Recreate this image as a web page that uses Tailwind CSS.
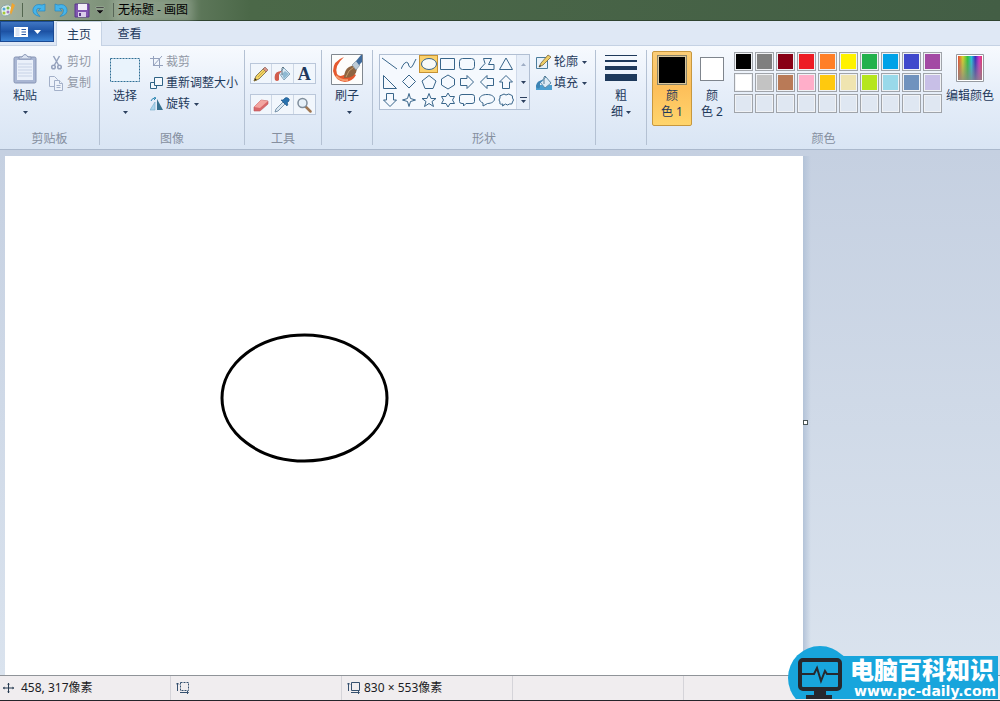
<!DOCTYPE html>
<html lang="zh-CN">
<head>
<meta charset="utf-8">
<meta name="viewport" content="width=device-width, initial-scale=1">
<title>无标题 - 画图</title>
<script src="https://cdn.jsdelivr.net/npm/@tailwindcss/browser@4"></script>
</head>
<body class="flex h-screen flex-col overflow-hidden bg-[#ccd8e8] font-['Noto_Sans','Noto_Sans_CJK_SC',sans-serif] text-xs leading-4 text-[#1e395b]">

<!-- Title bar -->
<header class="flex h-[21px] shrink-0 items-center border-b border-[#2f4430] bg-linear-to-r from-[#a5b2a0] via-[#4b6848] via-25% to-[#435e45] text-black">
  <svg class="h-4 w-4" viewBox="0 0 16 16"><path d="M1 9Q0 4 6 3q5-1 6 4-1 7-7 7-4 0-4-5z" fill="#e5eeec" stroke="#8aa6a8"/><circle cx="4" cy="7" r="1.5" fill="#50a8d8"/><circle cx="8" cy="6" r="1.5" fill="#7cbc4a"/><circle cx="4" cy="11" r="1.5" fill="#a8c838"/><circle cx="8" cy="10" r="1.5" fill="#a07ac0"/><path d="M12 1l3 2-4 10-1-3z" fill="#efa530"/></svg>
  <span class="ml-1.5 h-3.5 w-px bg-[#53664f]"></span>
  <button class="ml-2" aria-label="撤消"><svg class="h-4 w-4" viewBox="0 0 16 16"><path d="M9 14.500Q1 13 2 7q2-6 9-4l3-1v7H7l2.500-2.500Q6 5.500 5.500 8 5 11 9 14.500z" fill="#45b4ea" stroke="#2587c2" stroke-width=".7"/></svg></button>
  <button class="ml-1.5" aria-label="重做"><svg class="h-4 w-4" viewBox="0 0 16 16"><path d="M7 14.500Q15 13 14 7 12 1 5 3L2 2v7h7L6.500 6.500Q10 5.500 10.500 8 11 11 7 14.500z" fill="#45b4ea" stroke="#2587c2" stroke-width=".7"/></svg></button>
  <button class="ml-[5px]" aria-label="保存"><svg class="h-4 w-4" viewBox="0 0 16 16"><path d="M1 2h14v13H1z" fill="#8055b0" stroke="#59388a"/><path d="M4 2h9v6H4z" fill="#f2eef9"/><path d="M4 10h8v5H4z" fill="#d9ceea"/><path d="M5 11h2v3H5z" fill="#59388a"/></svg></button>
  <button class="ml-[5px]" aria-label="自定义快速访问工具栏"><svg class="h-3 w-2.5" viewBox="0 0 10 12"><path d="M1 3h8v1H1zM1 6h8L5 10z" fill="#111" stroke="#e8ede6" stroke-width=".3"/></svg></button>
  <span class="ml-2 h-3.5 w-px bg-[#405040]"></span>
  <h1 class="ml-1 bg-white/20 text-xs font-normal shadow-[0_0_8px_6px_rgba(255,255,255,0.2)]">无标题 - 画图</h1>
</header>

<!-- Tabs -->
<nav class="flex h-[25px] shrink-0 items-end border-b border-[#c5d2e4] bg-[#dfe8f5]">
  <button class="mb-[3px] flex h-[21px] w-[54px] items-center justify-center gap-1.5 border border-[#1b4a94] bg-linear-to-b from-[#3f76c3] via-[#1d52a4] to-[#3d85d6]" aria-label="画图菜单">
    <svg class="h-3 w-3.5" viewBox="0 0 14 12"><path d="M0 1h14v10H0z" fill="#fff"/><path d="M1.500 3h4M1.500 5h4M1.500 7h4M1.500 9h4" stroke="#b7cce8"/><path d="M7.500 3.500H12M7.500 6H12M7.500 8.500H12" stroke="#2b5ba4"/></svg>
    <svg class="h-1 w-[7px]" viewBox="0 0 7 4"><path d="M0 0h7L3.500 4z" fill="#fff"/></svg>
  </button>
  <button class="-mb-px ml-0.5 h-[25px] w-[46px] rounded-t-xs border border-b-0 border-[#c5d2e4] bg-[#f7fafe] pt-0.5">主页</button>
  <button class="h-[25px] w-[55px] pt-0.5">查看</button>
</nav>

<!-- Ribbon -->
<main class="flex h-[104px] shrink-0 border-b border-[#aab8cc] bg-linear-to-b from-[#f7fafe] via-[#e6eef9] via-45% to-[#d9e5f4]">
  <section class="my-1 flex w-[100px] flex-col border-r border-[#b4c1d3]" aria-label="剪贴板">
    <div class="flex flex-1">
      <button class="flex w-[50px] flex-col items-center pt-1">
        <svg class="h-[30px] w-6" viewBox="0 0 24 30"><rect x="1" y="3" width="22" height="26" rx="1.500" fill="#a9b6d3" stroke="#8795b5"/><path d="M4 6h16v20H4z" fill="#eaf0fa"/><path d="M5 10h14M5 13h14M5 16h14M5 19h14M5 22h14" stroke="#c7d2e6"/><path d="M6 5V3h3q3-5 6 0h3v2z" fill="#dbe3f1" stroke="#8795b5"/></svg>
        <span class="mt-1">粘贴</span>
        <svg class="mt-[7px] h-[3px] w-[5px]" viewBox="0 0 5 3"><path d="M0 0h5L2.500 3z" fill="#2c405f"/></svg>
      </button>
      <div class="flex flex-col gap-[3px] pt-[3px] text-[#9299a6]">
        <button class="flex h-[18px] items-center gap-1"><svg class="h-[15px] w-[13px]" viewBox="0 0 13 15" fill="none" stroke="#95a2bd" stroke-width="1.500"><path d="M3.500 1l5 9M9.500 1l-5 9"/><circle cx="3.500" cy="12" r="1.800"/><circle cx="9.500" cy="12" r="1.800"/></svg>剪切</button>
        <button class="flex h-[18px] items-center gap-1"><svg class="h-[15px] w-[13px] overflow-visible" viewBox="0 0 13 15" fill="#edf2fa" stroke="#a3b0c9"><path d="M-.500.500h5l3 3v7h-8z"/><path d="M4.500 4.500h5l3 3v7h-8z"/><path d="M9.500 4.500v3h3M6.500 9.500h4M6.500 11.500h4"/></svg>复制</button>
      </div>
    </div>
    <h2 class="text-center leading-3 font-normal text-[#858f9f]">剪贴板</h2>
  </section>

  <section class="my-1 flex w-[145px] flex-col border-r border-[#b4c1d3]" aria-label="图像">
    <div class="flex flex-1">
      <button class="flex w-[50px] flex-col items-center pt-1">
        <svg class="h-[30px] w-[30px]" viewBox="0 0 30 30"><rect x=".500" y="4.500" width="29" height="23" fill="#e9f3fc" stroke="#2f6e95" stroke-dasharray="2 1"/></svg>
        <span class="mt-1">选择</span>
        <svg class="mt-[7px] h-[3px] w-[5px]" viewBox="0 0 5 3"><path d="M0 0h5L2.500 3z" fill="#2c405f"/></svg>
      </button>
      <div class="flex flex-col items-start gap-[3px] pt-[3px] whitespace-nowrap">
        <button class="flex h-[18px] items-center gap-[3px] text-[#9299a6]"><svg class="h-3.5 w-[13px]" viewBox="0 0 13 14" fill="none" stroke="#95a2bd"><path d="M3.500 1v9.500H13M0 3.500h9.500V13M3 11l9-10"/></svg>裁剪</button>
        <button class="flex h-[18px] items-center gap-[3px]"><svg class="h-3.5 w-[13px]" viewBox="0 0 13 14" fill="#f3f8fd" stroke="#2f6285"><path d="M.500 6.500h6v6h-6z"/><path d="M4.500 1.500h8v8h-8z"/></svg>重新调整大小</button>
        <button class="flex h-[18px] items-center gap-[3px]"><svg class="h-3.5 w-[13px]" viewBox="0 0 13 14"><path d="M5 5v8H0z" fill="#aad5ec" stroke="#75abc9" stroke-width=".600"/><path d="M7 2v11h6z" fill="#37718f"/><path d="M1 4q1-3 4-3M4 0l2 1-2 2" fill="none" stroke="#2b86b2"/></svg>旋转<svg class="ml-px h-[3px] w-[5px]" viewBox="0 0 5 3"><path d="M0 0h5L2.500 3z" fill="#2c405f"/></svg></button>
      </div>
    </div>
    <h2 class="text-center leading-3 font-normal text-[#858f9f]">图像</h2>
  </section>

  <section class="my-1 flex w-[77px] flex-col border-r border-[#b4c1d3]" aria-label="工具">
    <div class="flex flex-1 flex-col items-center gap-2.5 pt-[13px]">
      <div class="grid w-[66px] grid-cols-3 divide-x divide-[#cdd7e5] border border-[#bac7da] bg-[#f1f6fc]">
        <button class="flex h-[19px] items-center justify-center" aria-label="铅笔"><svg class="h-4 w-4" viewBox="0 0 16 16"><path d="M1 15l2-5 8-8 3 3-8 8z" fill="#f3d463" stroke="#6f6544" stroke-width=".800"/><path d="M10 3l2-2 3 3-2 2z" fill="#d99487" stroke="#805b52" stroke-width=".600"/><path d="M1 15l1-3 2 2zM5 11l7-7" fill="#222" stroke="#a98832" stroke-width=".500"/></svg></button>
        <button class="flex h-[19px] items-center justify-center" aria-label="用颜色填充"><svg class="h-4 w-4" viewBox="0 0 16 16"><path d="M5 7l5-5 6 6-6 6z" fill="#d9e8f3" stroke="#6f94ac" stroke-width=".800"/><path d="M8 8l3-3 4 3-5 5z" fill="#8fb9d2"/><path d="M1 14Q-1 5 8 5L5 8v6q-2 2-4 0z" fill="#d15d4d"/><path d="M8 9V2q1-2 2 0" fill="none" stroke="#5f7786"/></svg></button>
        <button class="flex h-[19px] items-center justify-center font-['Liberation_Serif',serif] text-lg leading-4 font-bold text-[#20385b]" aria-label="文本">A</button>
      </div>
      <div class="grid w-[66px] grid-cols-3 divide-x divide-[#cdd7e5] border border-[#bac7da] bg-[#f1f6fc]">
        <button class="flex h-[19px] items-center justify-center" aria-label="橡皮擦"><svg class="h-4 w-4" viewBox="0 0 16 16"><path d="M1 10l7-7 7 1v3l-8 7H1z" fill="#d9686a" stroke="#b8565b" stroke-width=".600"/><path d="M1 10l7-7 7 1-8 7z" fill="#f2a5a0"/></svg></button>
        <button class="flex h-[19px] items-center justify-center" aria-label="颜色选取器"><svg class="h-4 w-4" viewBox="0 0 16 16"><path d="M1 15l1-3 7-7 2 2-7 7z" fill="#d9e7f2" stroke="#64839c" stroke-width=".800"/><path d="M7 3l6 6 1-2-1-1 2-2q1-2-1-3t-3 0L9 3z" fill="#2871ad" stroke="#174f83" stroke-width=".600"/></svg></button>
        <button class="flex h-[19px] items-center justify-center" aria-label="放大镜"><svg class="h-4 w-4" viewBox="0 0 16 16"><path d="M9 9l5.500 5.500" stroke="#a17853" stroke-width="2.500" stroke-linecap="round"/><circle cx="6.500" cy="6" r="4.500" fill="#e6f0f8" stroke="#7f8d9b" stroke-width="1.500"/></svg></button>
      </div>
    </div>
    <h2 class="text-center leading-3 font-normal text-[#858f9f]">工具</h2>
  </section>

  <section class="my-1 flex w-[51px] flex-col items-center border-r border-[#b4c1d3]" aria-label="刷子">
    <button class="flex flex-col items-center pt-1">
      <svg class="h-[31px] w-8" viewBox="0 0 32 31"><path d="M.500.500h31v30H.500z" fill="#fdfdfc" stroke="#818890"/><path d="M13 3Q2 7 2 17q2 10 12 11 8-1 11-7l-7-4q-8 8-12 3Q3 12 13 3z" fill="#e5592f"/><path d="M5 22q5 5 12 4" fill="none" stroke="#f49a6c" stroke-width="2"/><path d="M13 24q0-8 5-11l5-2 3 4q-1 9-13 9z" fill="#8d6441"/><path d="M15 23q2-7 8-10" stroke="#c59a68" fill="none"/><path d="M21 11l4-4 4 4-4 5z" fill="#bccad6" stroke="#71879a" stroke-width=".600"/><path d="M25 7l5-6h1v7l-3 3z" fill="#3f6b9c"/></svg>
      <span class="mt-[3px]">刷子</span>
      <svg class="mt-[7px] ml-1 h-[3px] w-[5px]" viewBox="0 0 5 3"><path d="M0 0h5L2.500 3z" fill="#2c405f"/></svg>
    </button>
  </section>

  <section class="my-1 flex w-[223px] flex-col border-r border-[#b4c1d3]" aria-label="形状">
    <div class="flex flex-1 items-start gap-1.5 pt-1 pl-1.5">
      <div class="flex w-[151px] border border-[#b1bfd3] bg-[#f5f9fe]">
        <div class="grid flex-1 grid-cols-7">
          <button class="flex h-[18px] items-center justify-center" aria-label="直线"><svg class="h-4 w-4" viewBox="0 0 16 16" fill="none" stroke="#38658a"><path d="M0 2l15 11"/></svg></button>
          <button class="flex h-[18px] items-center justify-center" aria-label="曲线"><svg class="h-4 w-4" viewBox="0 0 16 16" fill="none" stroke="#38658a"><path d="M0 13Q4 4 7 7q2 8 5 2l3-6"/></svg></button>
          <button class="flex h-[18px] items-center justify-center border border-[#c59234] bg-[#fbd16b]" aria-label="椭圆形"><svg class="h-4 w-4" viewBox="0 0 16 16" fill="#f7faf9" stroke="#38658a"><ellipse cx="8" cy="8" rx="7.500" ry="5.500"/></svg></button>
          <button class="flex h-[18px] items-center justify-center" aria-label="矩形"><svg class="h-4 w-4" viewBox="0 0 16 16" fill="none" stroke="#38658a"><path d="M.500 2.500h14v11H.500z"/></svg></button>
          <button class="flex h-[18px] items-center justify-center" aria-label="圆角矩形"><svg class="h-4 w-4" viewBox="0 0 16 16" fill="none" stroke="#38658a"><rect x=".500" y="2.500" width="15" height="11" rx="3"/></svg></button>
          <button class="flex h-[18px] items-center justify-center" aria-label="多边形"><svg class="h-4 w-4" viewBox="0 0 16 16" fill="none" stroke="#38658a"><path d="M4.500 2.500h8L9.500 8.500H15v5H.500L6 7.500z"/></svg></button>
          <button class="flex h-[18px] items-center justify-center" aria-label="三角形"><svg class="h-4 w-4" viewBox="0 0 16 16" fill="none" stroke="#38658a"><path d="M8 2l6.500 11.500h-13z"/></svg></button>
          <button class="flex h-[18px] items-center justify-center" aria-label="直角三角形"><svg class="h-4 w-4" viewBox="0 0 16 16" fill="none" stroke="#38658a"><path d="M1.500 1.500v13h13z"/></svg></button>
          <button class="flex h-[18px] items-center justify-center" aria-label="菱形"><svg class="h-4 w-4" viewBox="0 0 16 16" fill="none" stroke="#38658a"><path d="M8 1l6.500 6.500L8 14 1.500 7.500z"/></svg></button>
          <button class="flex h-[18px] items-center justify-center" aria-label="五边形"><svg class="h-4 w-4" viewBox="0 0 16 16" fill="none" stroke="#38658a"><path d="M8 1.500l7 5.500-3 7.500H4L1 7z"/></svg></button>
          <button class="flex h-[18px] items-center justify-center" aria-label="六边形"><svg class="h-4 w-4" viewBox="0 0 16 16" fill="none" stroke="#38658a"><path d="M8 1l6.500 4v6L8 15l-6.500-4V5z"/></svg></button>
          <button class="flex h-[18px] items-center justify-center" aria-label="右箭头"><svg class="h-4 w-4" viewBox="0 0 16 16" fill="none" stroke="#38658a"><path d="M1.500 4.500H8V1.500L14.500 8 8 14.500v-3H1.500z"/></svg></button>
          <button class="flex h-[18px] items-center justify-center" aria-label="左箭头"><svg class="h-4 w-4" viewBox="0 0 16 16" fill="none" stroke="#38658a"><path d="M14.500 4.500H8V1.500L1.500 8 8 14.500v-3h6.500z"/></svg></button>
          <button class="flex h-[18px] items-center justify-center" aria-label="上箭头"><svg class="h-4 w-4" viewBox="0 0 16 16" fill="none" stroke="#38658a"><path d="M8 1.500L14.500 8h-3v6.500h-7V8h-3z"/></svg></button>
          <button class="flex h-[18px] items-center justify-center" aria-label="下箭头"><svg class="h-4 w-4" viewBox="0 0 16 16" fill="none" stroke="#38658a"><path d="M8 14.500L14.500 8h-3V1.500h-7V8h-3z"/></svg></button>
          <button class="flex h-[18px] items-center justify-center" aria-label="四角星"><svg class="h-4 w-4" viewBox="0 0 16 16" fill="none" stroke="#38658a"><path d="M8 1.500l1.500 5 5 1.500-5 1.500-1.500 5-1.500-5-5-1.500 5-1.500z"/></svg></button>
          <button class="flex h-[18px] items-center justify-center" aria-label="五角星"><svg class="h-4 w-4" viewBox="0 0 16 16" fill="none" stroke="#38658a"><path d="M8 1.500l2 5h5l-4 3 1.500 5L8 11.500l-4.500 3 1.500-5-4-3h5z"/></svg></button>
          <button class="flex h-[18px] items-center justify-center" aria-label="六角星"><svg class="h-4 w-4" viewBox="0 0 16 16" fill="none" stroke="#38658a"><path d="M8 1l2 3.500h4.500L12.500 8l2 3.500H10L8 15l-2-3.500H1.500l2-3.500-2-3.500H6z"/></svg></button>
          <button class="flex h-[18px] items-center justify-center" aria-label="圆角矩形标注"><svg class="h-4 w-4" viewBox="0 0 16 16" fill="none" stroke="#38658a"><path d="M3 2.500h10q2.500 0 2.500 2v5q0 2-2.500 2H7L4.500 14v-2.500H3q-2.500 0-2.500-2v-5q0-2 2.500-2z"/></svg></button>
          <button class="flex h-[18px] items-center justify-center" aria-label="椭圆形标注"><svg class="h-4 w-4" viewBox="0 0 16 16" fill="none" stroke="#38658a"><path d="M8 2.500c4.500 0 7.500 2 7.500 4.500s-3 4.500-7 4.500L4 14v-3C1.500 10 .500 8.500.500 7c0-2.500 3-4.500 7.500-4.500z"/></svg></button>
          <button class="flex h-[18px] items-center justify-center" aria-label="云形标注"><svg class="h-4 w-4" viewBox="0 0 16 16" fill="none" stroke="#38658a"><path d="M4 3q2-2 4 0 3-2 5 0 2 0 1.500 3 2 2 0 4 0 3-3 2-2 2-4 0l-3 2 .500-2Q1 13 2 10q-2-2 0-4-1-3 2-3z"/></svg></button>
        </div>
        <div class="grid w-[13px] grid-rows-3 border-l border-[#d0daea] bg-[#e6eef9]">
          <button class="flex items-center justify-center" aria-label="向上滚动"><svg class="h-[3px] w-[5px]" viewBox="0 0 5 3"><path d="M0 3h5L2.500 0z" fill="#9faec5"/></svg></button>
          <button class="flex items-center justify-center" aria-label="向下滚动"><svg class="h-[3px] w-[5px]" viewBox="0 0 5 3"><path d="M0 0h5L2.500 3z" fill="#2c405f"/></svg></button>
          <button class="flex items-center justify-center" aria-label="更多形状"><svg class="h-1.5 w-[7px]" viewBox="0 0 7 6"><path d="M0 0h7v1H0zM1 3h5L3.500 6z" fill="#2c405f"/></svg></button>
        </div>
      </div>
      <div class="-mt-px flex flex-col gap-[3px] whitespace-nowrap">
        <button class="flex h-[18px] items-center gap-0.5"><svg class="h-4 w-4" viewBox="0 0 16 16"><path d="M.500 3.500h11v11H.500z" fill="#e9f2fa" stroke="#4b7c9c"/><path d="M3 13l2-4 7-8 3 2-8 8z" fill="#efce67" stroke="#77663c" stroke-width=".800"/><path d="M3 13l1-2 1 1z" fill="#222"/></svg>轮廓<svg class="ml-0.5 h-[3px] w-[5px]" viewBox="0 0 5 3"><path d="M0 0h5L2.500 3z" fill="#2c405f"/></svg></button>
        <button class="flex h-[18px] items-center gap-0.5"><svg class="h-4 w-4" viewBox="0 0 16 16"><path d="M0 10h16v5H0z" fill="#4c9fd0"/><path d="M4 7l6-5 5 6-6 5z" fill="#deebf5" stroke="#5e8ba8"/><path d="M0 12q0-7 8-7L4 8v4q-1 3-4 0z" fill="#3c83b4"/><path d="M8 9V2q1-2 2 0" fill="none" stroke="#587e98"/></svg>填充<svg class="ml-0.5 h-[3px] w-[5px]" viewBox="0 0 5 3"><path d="M0 0h5L2.500 3z" fill="#2c405f"/></svg></button>
      </div>
    </div>
    <h2 class="text-center leading-3 font-normal text-[#858f9f]">形状</h2>
  </section>

  <section class="my-1 flex w-[51px] flex-col items-center border-r border-[#b4c1d3]" aria-label="粗细">
    <button class="flex flex-col items-center pt-[5px]">
      <svg class="h-[26px] w-8" viewBox="0 0 32 26"><path d="M0 0h32v1H0zM0 5h32v2H0zM0 11h32v4H0zM0 19h32v7H0z" fill="#1e395b"/></svg>
      <span class="mt-[7px]">粗</span>
      <span class="flex items-center gap-[3px]">细<svg class="h-[3px] w-[5px]" viewBox="0 0 5 3"><path d="M0 0h5L2.500 3z" fill="#2c405f"/></svg></span>
    </button>
  </section>

  <section class="my-1 flex min-w-0 flex-1 flex-col" aria-label="颜色">
    <div class="flex flex-1 items-start pt-px pl-[5px]">
      <button class="flex h-[75px] w-10 flex-col items-center rounded-xs border border-[#c7983f] bg-linear-to-b from-[#fbcd77] via-[#fdbf5a] to-[#ffd56d] pt-[3px]">
        <span class="h-[30px] w-[30px] border border-[#8b8468] bg-black outline-1 -outline-offset-2 outline-[#d8c69d]"></span>
        <span class="mt-[3px]">颜</span>
        <span>色 1</span>
      </button>
      <button class="flex h-[75px] w-10 flex-col items-center pt-1.5">
        <span class="h-6 w-6 border border-[#7f858d] bg-white"></span>
        <span class="mt-[7px]">颜</span>
        <span>色 2</span>
      </button>
      <div class="mt-px ml-0.5 grid shrink-0 grid-cols-10 gap-0.5 *:h-[19px] *:w-[19px] *:border *:border-[#a0a4aa] *:shadow-[inset_0_0_0_1px_#f0f2f5]">
        <button class="bg-black" aria-label="黑色"></button><button class="bg-[#7f7f7f]" aria-label="灰色-50%"></button><button class="bg-[#880015]" aria-label="深红色"></button><button class="bg-[#ed1c24]" aria-label="红色"></button><button class="bg-[#ff7f27]" aria-label="橙色"></button><button class="bg-[#fff200]" aria-label="黄色"></button><button class="bg-[#22b14c]" aria-label="绿色"></button><button class="bg-[#00a2e8]" aria-label="青绿"></button><button class="bg-[#3f48cc]" aria-label="靛青"></button><button class="bg-[#a349a4]" aria-label="紫色"></button>
        <button class="bg-white" aria-label="白色"></button><button class="bg-[#c3c3c3]" aria-label="灰色-25%"></button><button class="bg-[#b97a57]" aria-label="褐色"></button><button class="bg-[#ffaec9]" aria-label="玫瑰色"></button><button class="bg-[#ffc90e]" aria-label="金色"></button><button class="bg-[#efe4b0]" aria-label="浅黄色"></button><button class="bg-[#b5e61d]" aria-label="酸橙色"></button><button class="bg-[#99d9ea]" aria-label="淡青绿色"></button><button class="bg-[#7092be]" aria-label="蓝灰色"></button><button class="bg-[#c8bfe7]" aria-label="淡紫色"></button>
        <button class="bg-[#dfe7f2]" aria-label="自定义 1"></button><button class="bg-[#dfe7f2]" aria-label="自定义 2"></button><button class="bg-[#dfe7f2]" aria-label="自定义 3"></button><button class="bg-[#dfe7f2]" aria-label="自定义 4"></button><button class="bg-[#dfe7f2]" aria-label="自定义 5"></button><button class="bg-[#dfe7f2]" aria-label="自定义 6"></button><button class="bg-[#dfe7f2]" aria-label="自定义 7"></button><button class="bg-[#dfe7f2]" aria-label="自定义 8"></button><button class="bg-[#dfe7f2]" aria-label="自定义 9"></button><button class="bg-[#dfe7f2]" aria-label="自定义 10"></button>
      </div>
      <button class="ml-1 flex shrink-0 flex-col items-center pt-[3px] whitespace-nowrap">
        <svg class="h-7 w-7" viewBox="0 0 28 28"><defs><linearGradient id="hue"><stop stop-color="#e84432"/><stop offset=".2" stop-color="#d9d52c"/><stop offset=".4" stop-color="#2dc43d"/><stop offset=".56" stop-color="#24c4dc"/><stop offset=".72" stop-color="#312bc0"/><stop offset=".88" stop-color="#dc31c9"/><stop offset="1" stop-color="#e33864"/></linearGradient><linearGradient id="fade" x2="0" y2="1"><stop stop-color="#888" stop-opacity="0"/><stop offset="1" stop-color="#888" stop-opacity=".8"/></linearGradient></defs><path d="M.500.500h27v27H.500z" fill="#fff" stroke="#969aa0"/><path d="M2 2h24v24H2z" fill="url(#hue)"/><path d="M2 2h24v24H2z" fill="url(#fade)"/></svg>
        <span class="mt-1.5">编辑颜色</span>
      </button>
    </div>
    <h2 class="text-center leading-3 font-normal text-[#858f9f]">颜色</h2>
  </section>
</main>

<!-- Drawing area -->
<div class="flex min-h-0 flex-1 bg-linear-to-b from-[#c5d0e1] to-[#dae3ee] pt-1.5 pl-[5px]">
  <div class="min-w-0 flex-1 overflow-hidden bg-white">
    <svg class="h-[519px] w-[798px]" viewBox="0 0 798 519" role="img" aria-label="椭圆形"><ellipse cx="299.500" cy="242" rx="82.500" ry="63" fill="none" stroke="#000" stroke-width="3"/></svg>
  </div>
  <div class="flex w-[197px] items-center bg-linear-to-r from-[#b3c3d8] to-transparent to-4%">
    <span class="mt-[13px] h-[5px] w-[5px] border border-[#4a5555] bg-white"></span>
  </div>
</div>

<!-- Status bar -->
<footer class="flex h-[26px] shrink-0 items-center border-t border-b border-t-[#909499] border-b-[#25242a] bg-[#f0edef] text-[#1c1c24]">
  <div class="flex h-full w-[171px] items-center gap-[7px] border-r border-[#d5d4d9] pl-[3px]"><svg class="h-3 w-[11px]" viewBox="0 0 11 12" stroke="#25384f" fill="#25384f"><path d="M5.500 1v10M0 6h11"/><path d="M4 2.500h3L5.500 1zM4 9.500h3L5.500 11zM1.500 4.500v3L0 6zM9.500 4.500v3L11 6z" stroke="none"/></svg>458, 317像素</div>
  <div class="flex h-full w-[171px] items-center border-r border-[#d5d4d9] pl-[5px]"><svg class="h-3 w-[13px]" viewBox="0 0 13 12" fill="none" stroke="#35506e"><path d="M4.500.500h8v8h-8z" stroke-dasharray="2 1"/><path d="M1.500 9V1M0 2.500L1.500 1 3 2.500M4 10.500h8M11 9l1.500 1.500L11 12"/></svg></div>
  <div class="flex h-full w-[171px] items-center gap-1 border-r border-[#d5d4d9] pl-[5px]"><svg class="h-3 w-[13px]" viewBox="0 0 13 12" fill="none" stroke="#35506e"><path d="M4.500.500h8v8h-8z"/><path d="M1.500 9V1M0 2.500L1.500 1 3 2.500M4 10.500h8M11 9l1.500 1.500L11 12"/></svg>830 × 553像素</div>
  <div class="h-full w-[171px] border-r border-[#d5d4d9]"></div>
</footer>

<!-- Site badge over the lower right corner -->
<a href="#" class="absolute right-0.5 bottom-0.5 flex h-[53px] w-[210px] items-end overflow-hidden text-white">
  <svg class="absolute inset-0 h-full w-full" viewBox="0 0 210 53" preserveAspectRatio="none"><circle cx="32" cy="32" r="32" fill="#18a5dc"/><path d="M50 10h160v43H50z" fill="#18a5dc"/><rect x="12" y="14" width="40" height="29" rx="3" fill="#18a5dc" stroke="#26282e" stroke-width="4"/><path d="M14 28h12l3-6 4 13 4-10 2 3h11" fill="none" stroke="#26282e" stroke-width="2"/><path d="M26 44h12v5h6v4H18v-4h8z" fill="#26282e"/></svg>
  <span class="relative ml-[62px] flex flex-col items-start whitespace-nowrap">
    <strong class="font-['Liberation_Sans','Noto_Sans_CJK_SC',sans-serif] text-2xl leading-6 font-black">电脑百科知识</strong>
    <span class="pl-1 font-['DejaVu_Sans',sans-serif] text-sm leading-4 font-bold">www.pc-daily.com</span>
  </span>
</a>
</body>
</html>
